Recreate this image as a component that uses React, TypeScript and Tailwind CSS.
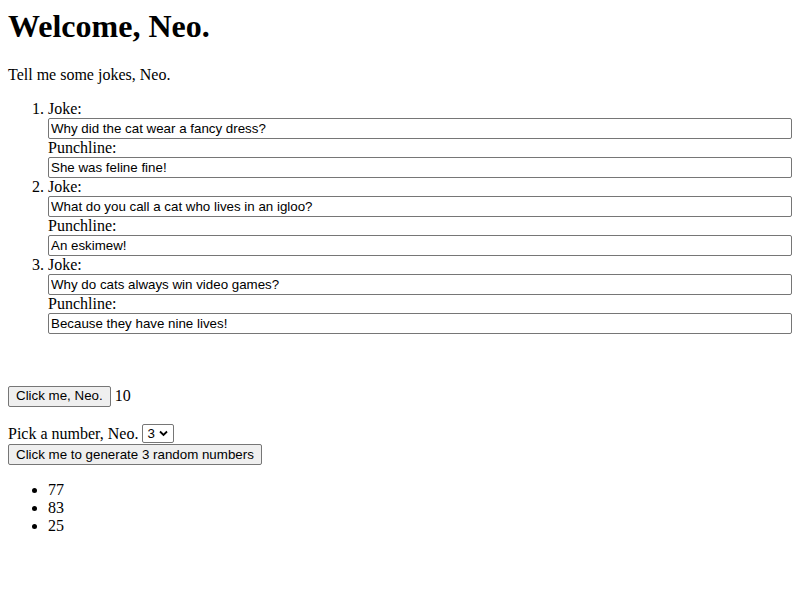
import React, { useState } from 'react';

interface Joke {
    joke: string;
    punchline: string;
}

const initialJokes: Joke[] = [
    { joke: 'Why did the cat wear a fancy dress?', punchline: 'She was feline fine!' },
    { joke: 'What do you call a cat who lives in an igloo?', punchline: 'An eskimew!' },
    { joke: 'Why do cats always win video games?', punchline: 'Because they have nine lives!' },
];

const inputClass =
    "block w-full h-[21px] px-[2px] bg-white border border-[#767676] rounded-[2px] font-['Liberation_Sans',Arial,sans-serif] text-[13.33px] text-black outline-none";

const buttonClass =
    "h-[21px] px-[7px] bg-[#efefef] border border-[#767676] rounded-[2px] font-['Liberation_Sans',Arial,sans-serif] text-[13.33px] leading-none text-black";

export default function App() {
    const name = 'Neo';
    const [jokes, setJokes] = useState<Joke[]>(initialJokes);
    const [count, setCount] = useState(10);
    const [howMany, setHowMany] = useState(3);
    const [numbers, setNumbers] = useState<number[]>([77, 83, 25]);

    const updateJoke = (i: number, key: keyof Joke, value: string) => {
        setJokes(jokes.map((j, idx) => (idx === i ? { ...j, [key]: value } : j)));
    };

    const generate = () => {
        setNumbers(Array.from({ length: howMany }, () => Math.floor(Math.random() * 100)));
    };

    return (
        <div className="min-h-screen bg-white p-2 font-['Liberation_Serif','Times_New_Roman',serif] text-base leading-[18px] text-black">
            <h1 className="text-[32px] font-bold leading-[37px] mb-[21px]">Welcome, {name}.</h1>

            <p className="mb-4">Tell me some jokes, {name}.</p>

            {/* Jokes list */}
            <ol className="list-decimal pl-10">
                {jokes.map((j, i) => (
                    <li key={i}>
                        <div>Joke:</div>
                        <input className={inputClass} value={j.joke} onChange={(e) => updateJoke(i, 'joke', e.target.value)} />
                        <div>Punchline:</div>
                        <input className={inputClass} value={j.punchline} onChange={(e) => updateJoke(i, 'punchline', e.target.value)} />
                    </li>
                ))}
            </ol>

            {/* Counter */}
            <div className="mt-[51px] flex items-center h-[22px]">
                <button className={buttonClass} onClick={() => setCount(count + 1)}>
                    Click me, {name}.
                </button>
                <span className="ml-1">{count}</span>
            </div>

            {/* Random numbers */}
            <div className="mt-4 flex items-center h-[21px]">
                <span>Pick a number, {name}.</span>
                <span className="relative ml-1 inline-flex">
                    <select
                        value={howMany}
                        onChange={(e) => setHowMany(Number(e.target.value))}
                        className="appearance-none h-[19px] w-[32px] pl-[4px] pr-[16px] bg-white border border-[#767676] rounded-[2px] font-['Liberation_Sans',Arial,sans-serif] text-[13.33px] text-black outline-none"
                    >
                        {[1, 2, 3, 4, 5].map((n) => (
                            <option key={n} value={n}>{n}</option>
                        ))}
                    </select>
                    <svg className="pointer-events-none absolute right-[6px] top-[6px]" width="9" height="7" viewBox="0 0 9 7" fill="none">
                        <path d="M1 1.5L4.5 5L8 1.5" stroke="#000" strokeWidth="1.8" />
                    </svg>
                </span>
            </div>
            <button className={buttonClass + ' block'} onClick={generate}>
                Click me to generate {howMany} random numbers
            </button>

            <ul className="mt-4 list-disc pl-10">
                {numbers.map((n, i) => (
                    <li key={i}>{n}</li>
                ))}
            </ul>
        </div>
    );
}
